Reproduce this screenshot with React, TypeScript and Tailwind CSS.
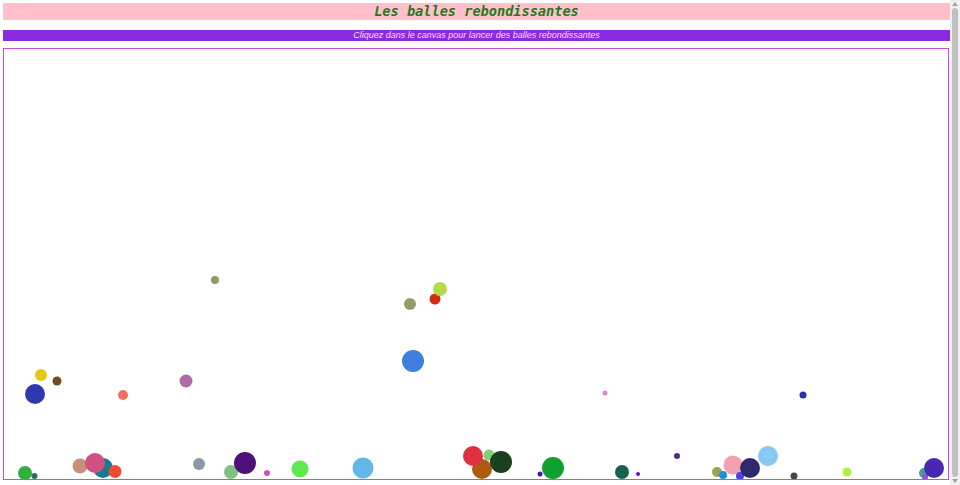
import React from "react";

type Ball = [number, number, number, string];

// page coords: cx, cy, r, colour
const balls: Ball[] = [
  [215, 280, 4, "#8f9a6a"],
  [410, 304, 6, "#959c6a"],
  [435, 299, 5.5, "#d42a10"],
  [440, 289, 7, "#b5d94a"],
  [413, 361, 11, "#3e7ede"],
  [41, 375, 6, "#e8c80e"],
  [57, 381, 4.5, "#6b4f20"],
  [35, 394, 10, "#3038b0"],
  [123, 395, 5, "#f07068"],
  [186, 381, 6.5, "#b06aa8"],
  [605, 393, 2.5, "#e080e0"],
  [803, 395, 3.5, "#2a30a0"],
  [25, 473, 7, "#2fb040"],
  [34.5, 476, 3, "#2a6a6a"],
  [80, 466, 7.5, "#c89078"],
  [103, 468, 10, "#1a7a90"],
  [95, 463, 10, "#d05080"],
  [115, 471.5, 6.5, "#f04a30"],
  [199, 464, 6, "#8898a8"],
  [231, 472, 7, "#80c080"],
  [245, 463, 11, "#50107a"],
  [267, 473, 3, "#d050c0"],
  [300, 469, 8.5, "#60e850"],
  [363, 468, 10.5, "#60b8e8"],
  [482, 469, 10, "#b05a10"],
  [473, 456, 10, "#e03040"],
  [489, 455, 5.5, "#80d070"],
  [501, 462, 11, "#1a4020"],
  [540, 474, 2.5, "#5010b0"],
  [553, 468, 11, "#10a030"],
  [622, 472, 7, "#186050"],
  [638, 474, 2, "#6010c0"],
  [677, 456, 3, "#503080"],
  [717, 472, 5, "#a0a050"],
  [723, 475, 4, "#1a90e0"],
  [733, 465, 9.5, "#f4a0b0"],
  [740, 476, 4, "#5040f0"],
  [750, 468, 10, "#302870"],
  [768, 456, 10, "#88c8f0"],
  [794, 476, 3.5, "#504050"],
  [847, 472, 4.5, "#b0f040"],
  [924, 473, 5, "#40a0a0"],
  [925, 477, 3, "#9050d0"],
  [934, 468, 10, "#4828b0"],
];

export default function App() {
  return (
    <div className="flex h-[485px] w-[960px] overflow-hidden bg-white">
      <main className="flex w-[950px] flex-col pl-[3px] pt-[3px]">
        <h1 className="flex h-[17px] items-center justify-center bg-[#ffc0cb] font-['DejaVu_Sans_Mono',monospace] text-[13.6px] font-bold italic leading-none text-[#1f7a1f]">
          Les balles rebondissantes
        </h1>
        <p className="mt-[10px] flex h-[11px] items-center justify-center bg-[#8a2be2] font-['Liberation_Sans',sans-serif] text-[9px] italic leading-none text-[#f7def5]">
          Cliquez dans le canvas pour lancer des balles rebondissantes
        </p>
        <div className="mt-[7px] h-[432px] w-[946px] border border-[#c64ae6]">
          <svg width="944" height="430" viewBox="4 49 944 430" className="block">
            {balls.map(([cx, cy, r, c], i) => (
              <circle key={i} cx={cx} cy={cy} r={r} fill={c} />
            ))}
          </svg>
        </div>
      </main>
      <aside className="flex w-[10px] flex-col items-center bg-[#f1f1f1] py-[2px]">
        <svg width="6" height="4" viewBox="0 0 6 4">
          <path d="M0 4 L3 0 L6 4 Z" fill="#a3a3a3" />
        </svg>
        <div className="mt-[2px] w-[6px] flex-1 rounded-[3px] bg-[#c1c1c1]" />
        <svg width="6" height="4" viewBox="0 0 6 4" className="mt-[2px]">
          <path d="M0 0 L3 4 L6 0 Z" fill="#a3a3a3" />
        </svg>
      </aside>
    </div>
  );
}
